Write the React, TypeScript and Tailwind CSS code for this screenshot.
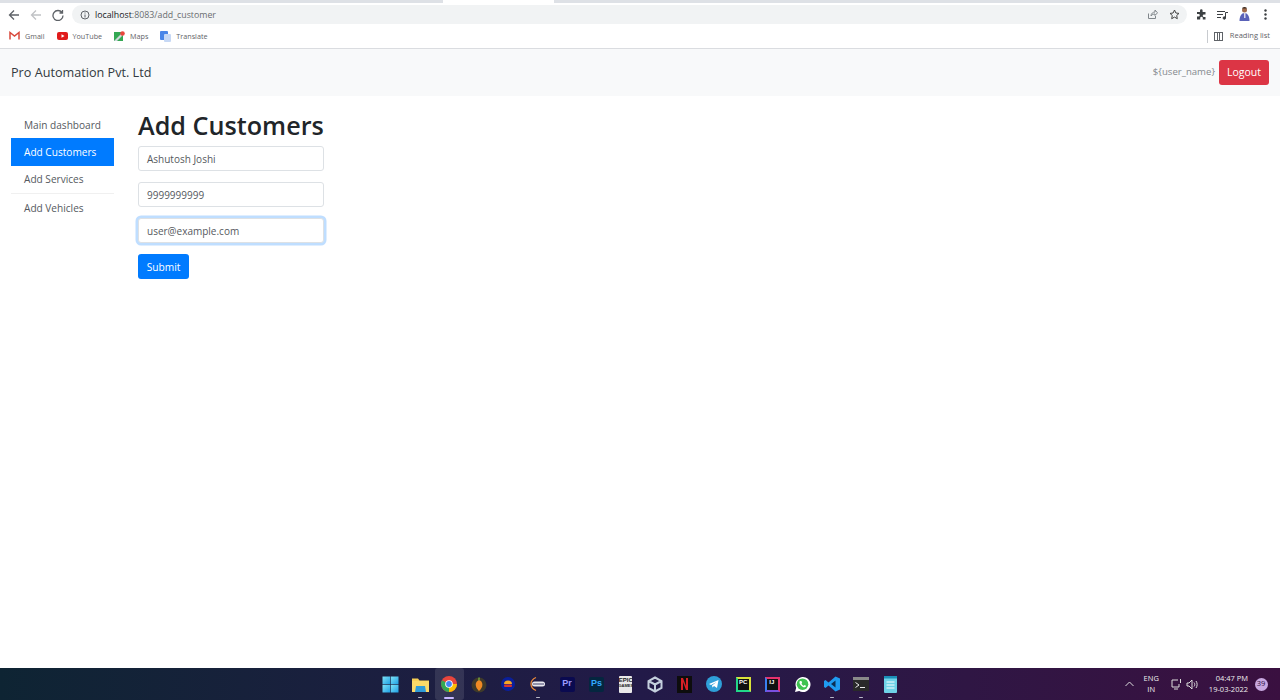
import React from "react";

const ui = "font-['Open_Sans','Noto_Sans',sans-serif]";

function Back({ color = "#5f6368" }: { color?: string }) {
  return (
    <svg width="12" height="12" viewBox="0 0 12 12" fill="none" stroke={color} strokeWidth="1.3">
      <path d="M11 6H1.5M6 1.5 1.5 6 6 10.5" />
    </svg>
  );
}

const Win = () => (
  <svg width="17" height="17" viewBox="0 0 17 17">
    <defs>
      <linearGradient id="w" x1="0" y1="0" x2="1" y2="1">
        <stop offset="0" stopColor="#7fe3f7" />
        <stop offset="1" stopColor="#1d9fe4" />
      </linearGradient>
    </defs>
    <rect x="0.5" y="0.5" width="7.7" height="7.7" fill="url(#w)" />
    <rect x="8.8" y="0.5" width="7.7" height="7.7" fill="url(#w)" />
    <rect x="0.5" y="8.8" width="7.7" height="7.7" fill="url(#w)" />
    <rect x="8.8" y="8.8" width="7.7" height="7.7" fill="url(#w)" />
  </svg>
);
const Folder = () => (
  <svg width="17" height="15" viewBox="0 0 17 15">
    <path d="M0 1.5h6l1.5 2H17V15H0z" fill="#f7cf55" />
    <rect y="4" width="17" height="11" fill="#fbd968" />
    <path d="M4 9h9l1 6H3z" fill="#2f9bd8" />
  </svg>
);
const Chrome = () => (
  <svg width="16" height="16" viewBox="0 0 16 16">
    <circle cx="8" cy="8" r="8" fill="#e8453c" />
    <path d="M8 8 1 4.2A8 8 0 0 0 8 16z" fill="#34a853" />
    <path d="M8 8h8a8 8 0 0 1-8 8z" fill="#fbbc05" />
    <circle cx="8" cy="8" r="3.8" fill="#fff" />
    <circle cx="8" cy="8" r="2.9" fill="#4285f4" />
  </svg>
);
const Fruity = () => (
  <svg width="16" height="17" viewBox="0 0 16 17">
    <circle cx="8" cy="9" r="7.5" fill="#3f3a2a" />
    <path d="M8 4c3 1 4 4 3 7-1 2-2 3-3 4-2-2-4-5-3-8 .5-1.500 1.500-2.500 3-3z" fill="#f08a24" />
    <path d="M8 1c1 1 1 2 0 4-1-1-1-3 0-4z" fill="#7fb23f" />
  </svg>
);
const Burger = () => (
  <svg width="14" height="14" viewBox="0 0 14 14">
    <circle cx="7" cy="7" r="7" fill="#0a1f9a" />
    <path d="M3 7a4 3.500 0 0 1 8 0z" fill="#f5a623" />
    <rect x="3" y="7.500" width="8" height="2.500" rx="1" fill="#d8342a" />
  </svg>
);
const Postman = () => (
  <svg width="16" height="16" viewBox="0 0 16 16">
    <path d="M6 1.500C2.500 3 1 5.500 1 8s1.500 5 5 6.500" fill="none" stroke="#ef8b3a" strokeWidth="1.300" />
    <rect x="2" y="5.500" width="13" height="5" rx="2.500" fill="#e8e8ee" />
    <rect x="3" y="7.500" width="11" height="1" fill="#40406a" />
  </svg>
);
const Adobe = ({ bg, fg, t }: { bg: string; fg: string; t: string }) => (
  <div className={`flex h-[15px] w-[15px] items-center justify-center rounded-[2px] font-['Liberation_Sans',sans-serif] text-[9px] font-bold ${bg} ${fg}`}>{t}</div>
);
const Epic = () => (
  <div className="flex h-[17px] w-[13px] flex-col items-center rounded-[1px] bg-[#e9e9e9] pt-[1px] font-['Liberation_Sans',sans-serif] text-[6px] leading-[6px] font-bold text-[#222]">
    <span>EPIC</span>
    <span className="text-[4px] leading-[5px]">GAMES</span>
  </div>
);
const VBox = () => (
  <svg width="16" height="17" viewBox="0 0 16 17" fill="none" stroke="#c4cfdd" strokeWidth="2">
    <path d="M8 1.500 14.500 5v7L8 15.500 1.500 12V5zM1.500 5 8 8.500 14.500 5M8 8.500v7" />
  </svg>
);
const Netflix = () => (
  <div className="flex h-[17px] w-[15px] items-center justify-center bg-[#0d0d0d]">
    <svg width="7" height="12" viewBox="0 0 7 12">
      <path d="M0 0h2l3 8V0h2v12H5L2 4v8H0z" fill="#d81f26" />
    </svg>
  </div>
);
const Telegram = () => (
  <svg width="16" height="16" viewBox="0 0 16 16">
    <circle cx="8" cy="8" r="8" fill="#2f9fd8" />
    <path d="M3 8 12.500 4 11 12 8 10l-1.500 1.500L6 9.500 10.500 6 5 9z" fill="#fff" />
  </svg>
);
const PyCharm = () => (
  <div className="h-[15px] w-[15px] border-2 border-[#d9e23a] bg-[#111] pl-[1px] font-['Liberation_Sans',sans-serif] text-[6px] leading-[7px] font-bold text-white [border-left-color:#21d789] [border-bottom-color:#21d789]">
    PC
  </div>
);
const Idea = () => (
  <div className="h-[15px] w-[15px] border-2 border-[#e5326e] bg-[#111] pl-[2px] font-['Liberation_Sans',sans-serif] text-[6px] leading-[7px] font-bold text-white [border-left-color:#3a7ff0] [border-bottom-color:#7a50e0]">
    IJ
  </div>
);
const WhatsApp = () => (
  <svg width="17" height="17" viewBox="0 0 17 17">
    <path d="M1 16l1.200-4.300A7.500 7.500 0 1 1 5.200 15z" fill="#fff" />
    <circle cx="8.500" cy="8.200" r="5.800" fill="#3fc351" />
    <path d="M6 5c-1 1-.7 2.500.8 4.200S10 11.700 11.200 11c.8-.5 1-1 .8-1.300L10.500 9l-.7.700C9 9.500 7.800 8.300 7.500 7.400l.7-.7L7.400 5z" fill="#fff" />
  </svg>
);
const VSCode = () => (
  <svg width="16" height="16" viewBox="0 0 16 16">
    <path d="M11.500 0.500 16 2.500v11l-4.500 2L4.500 9.500 1.500 12 0 11V5l1.500-1 3 2.500z" fill="#1f9cf0" />
    <path d="M11.500 4.500 7 8l4.500 3.500z" fill="#0b2f52" />
  </svg>
);
const Term = () => (
  <svg width="16" height="14" viewBox="0 0 16 14">
    <rect width="16" height="14" fill="#2a2a2a" />
    <rect width="16" height="3" fill="#8a8a8a" />
    <path d="M2.500 5.500 6 8 2.500 10.500" fill="none" stroke="#eee" strokeWidth="1" />
    <rect x="7" y="10" width="5" height="1" fill="#eee" />
  </svg>
);
const Notepad = () => (
  <svg width="13" height="17" viewBox="0 0 13 17">
    <rect width="13" height="17" rx="1" fill="#6fd3e8" />
    <rect width="13" height="2.500" fill="#1b8fb8" />
    <path d="M2.500 6h8M2.500 9h8M2.500 12h8" stroke="#fff" strokeWidth="1" />
  </svg>
);

const dock: { node: React.ReactNode; mark?: "dot" | "active" }[] = [
  { node: <Win /> },
  { node: <Folder />, mark: "dot" },
  { node: <Chrome />, mark: "active" },
  { node: <Fruity /> },
  { node: <Burger /> },
  { node: <Postman />, mark: "dot" },
  { node: <Adobe bg="bg-[#0a0a50]" fg="text-[#9a9aff]" t="Pr" /> },
  { node: <Adobe bg="bg-[#04263f]" fg="text-[#31a8ff]" t="Ps" /> },
  { node: <Epic /> },
  { node: <VBox /> },
  { node: <Netflix /> },
  { node: <Telegram /> },
  { node: <PyCharm /> },
  { node: <Idea /> },
  { node: <WhatsApp /> },
  { node: <VSCode />, mark: "dot" },
  { node: <Term />, mark: "dot" },
  { node: <Notepad />, mark: "dot" },
];

const Bookmark = ({ icon, label }: { icon: React.ReactNode; label: string }) => (
  <div className="flex items-center gap-[5px]">
    {icon}
    <span className="text-[7.200px] text-[#5f6368]">{label}</span>
  </div>
);

const field =
  "h-[25px] w-[186px] rounded-[3px] border border-[#dde1e5] bg-white px-2 text-[10px] leading-none text-[#55595e] flex items-center";

export default function App() {
  return (
    <div className={`flex h-[700px] w-[1280px] flex-col overflow-hidden bg-white ${ui}`}>
      {/* tab strip */}
      <div className="flex h-[4px] shrink-0 bg-white">
        <div className="h-[3px] w-[443px] bg-[#dee1e6]" />
        <div className="w-[111px]" />
        <div className="h-[3px] flex-1 bg-[#dee1e6]" />
      </div>

      {/* toolbar */}
      <div className="flex h-[21px] shrink-0 items-center pl-[8px] pr-[13px]">
        <div className="flex w-[64px] items-center gap-[10px]">
          <Back />
          <Back color="#c0c2c5" />
          <svg width="12" height="12" viewBox="0 0 12 12" fill="none" stroke="#5f6368" strokeWidth="1.300">
            <path d="M10 3.500A5 5 0 1 0 11 6.500M10.500 1v3h-3" />
          </svg>
        </div>
        <div className="flex h-[19px] w-[1115px] items-center rounded-full bg-[#f1f3f4] pl-[8px] pr-[7px]">
          <svg width="10" height="10" viewBox="0 0 10 10" fill="none" stroke="#5f6368">
            <circle cx="5" cy="5" r="4" />
            <path d="M5 4.500V7.500M5 2.500v1" />
          </svg>
          <span className="ml-[5px] mt-[2px] text-[8.800px] text-[#6a6d70]">
            <span className="text-[#202124]">localhost</span>:8083/add_customer
          </span>
          <svg width="11" height="11" viewBox="0 0 11 11" fill="none" stroke="#80868b" className="ml-auto">
            <path d="M1.500 4.500v5h7V7M4 7c0-2.500 2-4 4-4V1l2.500 2.800L8 6.500V5C6.500 5 5 5.500 4 7z" />
          </svg>
          <svg width="11" height="11" viewBox="0 0 11 11" fill="none" stroke="#444" className="ml-[11px]">
            <path d="m5.500 1 1.400 3 3.100.4-2.300 2.100.6 3.200-2.800-1.600-2.800 1.600.6-3.200L1 4.400 4.100 4z" />
          </svg>
        </div>
        <div className="ml-auto flex items-center gap-[10px]">
          <svg width="11" height="11" viewBox="0 0 11 11" fill="#3c4043">
            <path d="M4 1.500a1.300 1.300 0 0 1 2.600 0V3H9.500v2.500H8a1.300 1.300 0 0 0 0 2.600h1.500V10.500H6.800V9a1.300 1.300 0 0 0-2.600 0v1.500H1V7.500h1.500a1.300 1.300 0 0 0 0-2.600H1V3h3z" />
          </svg>
          <svg width="11" height="10" viewBox="0 0 11 10" fill="none" stroke="#3c4043">
            <path d="M0 1.500h8M0 4.500h6M0 7.500h4M8.500 8V2.500h2.500" />
            <circle cx="7.300" cy="8" r="1.200" fill="#3c4043" />
          </svg>
          <svg width="13" height="15" viewBox="0 0 13 15">
            <circle cx="6.500" cy="3" r="2.500" fill="#a06a4a" />
            <path d="M6.500 0a2.500 1.600 0 0 1 2.500 1.600H4A2.500 1.600 0 0 1 6.500 0z" fill="#3a2a20" />
            <path d="M1.500 14c0-5 2-8 5-8s5 3 5 8z" fill="#5a62b8" />
            <path d="M6 6h1.500v5H6z" fill="#d8d8ea" />
          </svg>
          <svg width="3" height="11" viewBox="0 0 3 11" fill="#3c4043" className="ml-[3px]">
            <circle cx="1.500" cy="1.500" r="1.200" />
            <circle cx="1.500" cy="5.500" r="1.200" />
            <circle cx="1.500" cy="9.500" r="1.200" />
          </svg>
        </div>
      </div>

      {/* bookmarks */}
      <div className="flex h-[24px] shrink-0 items-center border-b border-[#dadce0] pb-[1px] pl-[9px] pr-[10px]">
        <div className="flex items-center gap-[12px]">
          <Bookmark
            label="Gmail"
            icon={
              <svg width="11" height="9" viewBox="0 0 11 9" fill="none">
                <path d="M1 8.500V1.500L5.500 5 10 1.500v7" stroke="#d9483b" strokeWidth="1.500" />
              </svg>
            }
          />
          <Bookmark
            label="YouTube"
            icon={
              <svg width="11" height="8" viewBox="0 0 11 8">
                <rect width="11" height="8" rx="2" fill="#e01b1b" />
                <path d="M4.500 2.200 7.500 4l-3 1.800z" fill="#fff" />
              </svg>
            }
          />
          <Bookmark
            label="Maps"
            icon={
              <svg width="11" height="11" viewBox="0 0 11 11">
                <rect y="1" width="9" height="9" fill="#34a853" />
                <path d="M0 10 9 1v3L3 10z" fill="#cfd8dc" />
                <circle cx="8.500" cy="2.500" r="2.300" fill="#e8453c" />
              </svg>
            }
          />
          <Bookmark
            label="Translate"
            icon={
              <svg width="11" height="11" viewBox="0 0 11 11">
                <rect width="8" height="9" rx="1" fill="#4a86e8" />
                <rect x="4" y="3" width="7" height="8" rx="1" fill="#c6d8f5" />
              </svg>
            }
          />
        </div>
        <div className="ml-auto flex items-center">
          <div className="mr-[6px] h-[13px] w-px bg-[#c8cbcf]" />
          <svg width="9" height="9" viewBox="0 0 9 9" fill="none" stroke="#5f6368" className="mr-[7px]">
            <rect x="0.500" y="0.500" width="8" height="8" />
            <path d="M3.500 1v7M5.500 1v7" />
          </svg>
          <span className="text-[7.500px] text-[#5f6368]">Reading list</span>
        </div>
      </div>

      {/* navbar */}
      <div className="flex h-[47px] shrink-0 items-center bg-[#f8f9fa] pl-[11px] pr-[11px]">
        <span className="text-[12.650px] text-[#333a40]">Pro Automation Pvt. Ltd</span>
        <span className="ml-auto text-[9.600px] text-[#858a8f]">{"${user_name}"}</span>
        <div className="ml-[4px] flex h-[25px] w-[50px] items-center justify-center rounded-[3px] bg-[#dc3545] text-[10.500px] text-white">
          Logout
        </div>
      </div>

      {/* main */}
      <div className="flex min-h-0 flex-1 pl-[11px] pt-[15px]">
        <nav className="flex w-[103px] flex-col text-[10.100px] text-[#55595e]">
          <div className="flex h-[27px] items-center pl-[13px] pt-[2px]">Main dashboard</div>
          <div className="flex h-[28px] items-center bg-[#007bff] pl-[13px] pt-[2px] text-white">Add Customers</div>
          <div className="flex h-[28px] items-center border-b border-[#f0f0f0] pl-[13px] pt-[1px]">Add Services</div>
          <div className="flex h-[27px] items-center pl-[13px] pt-[2px]">Add Vehicles</div>
        </nav>
        <div className="ml-[24px] flex flex-col items-start">
          <h1 className="mb-[7px] text-[25.200px] leading-[28px] font-semibold text-[#212529]">Add Customers</h1>
          <div className={field}>Ashutosh Joshi</div>
          <div className={`${field} mt-[11px]`}>9999999999</div>
          <div className={`${field} mt-[11px] border-[#80bdff] shadow-[0_0_0_2.500px_rgba(0,123,255,0.25)]`}>user@example.com</div>
          <div className="mt-[11px] flex h-[25px] w-[51px] items-center justify-center rounded-[3px] bg-[#007bff] pt-[2px] text-[10.200px] text-white">
            Submit
          </div>
        </div>
      </div>

      {/* taskbar */}
      <div className="relative flex h-[32px] shrink-0 items-center justify-end bg-gradient-to-r from-[#0e2433] via-[#221a48] to-[#3a1040] pr-[12.500px] text-[7.500px] text-[#eee]">
        <div className="absolute left-[376px] top-0 flex h-[32px]">
          {dock.map((d, i) => (
            <div
              key={i}
              className={`relative flex h-[32px] w-[29.400px] items-center justify-center ${d.mark === "active" ? "rounded-[3px] bg-white/10" : ""}`}
            >
              {d.node}
              {d.mark === "dot" && <div className="absolute bottom-[2px] h-[1.500px] w-[4px] rounded-full bg-[#b8b8c8]" />}
              {d.mark === "active" && <div className="absolute bottom-[1px] h-[2px] w-[10px] rounded-full bg-[#c8b8ff]" />}
            </div>
          ))}
        </div>
        <svg width="9" height="6" viewBox="0 0 9 6" fill="none" stroke="#ddd" className="mr-[10px]">
          <path d="M0.500 5 4.500 1l4 4" />
        </svg>
        <div className="mr-[12px] flex flex-col items-center leading-[11px]">
          <span>ENG</span>
          <span>IN</span>
        </div>
        <svg width="12" height="12" viewBox="0 0 12 12" fill="none" stroke="#ddd" className="mr-[3px]">
          <path d="M7 2H1v7h7V6M3 11h4M9.500 1v4" />
        </svg>
        <svg width="12" height="11" viewBox="0 0 12 11" fill="none" stroke="#ddd" className="mr-[11px]">
          <path d="M1 4v3h2l3 3V1L3 4zM8 3.500c1 1 1 3 0 4M10 2c1.500 2 1.500 5 0 7" />
        </svg>
        <div className="mr-[6.500px] flex flex-col items-end leading-[11px]">
          <span>04:47 PM</span>
          <span>19-03-2022</span>
        </div>
        <div className="flex h-[13px] w-[13px] items-center justify-center rounded-full bg-[#c8a8e0] text-[7.500px] text-[#2a1040]">
          39
        </div>
      </div>
    </div>
  );
}
